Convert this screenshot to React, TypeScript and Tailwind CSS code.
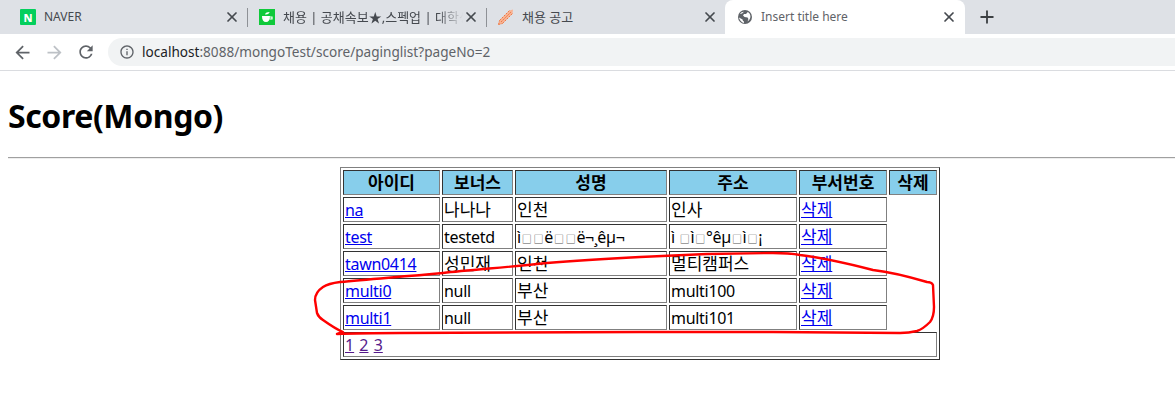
import { Plus, X } from "lucide-react";
import type { ReactNode } from "react";

const sans = "font-['Noto_Sans','Noto_Sans_CJK_KR',sans-serif]";

type Row = { id: string; bonus: string; name: string; addr: string };

const rows: Row[] = [
  { id: "na", bonus: "나나나", name: "인천", addr: "인사" },
  { id: "test", bonus: "testetd", name: "ì□□ë□□ë¬¸êµ¬", addr: "ì □ì□°êµ□ì□¡" },
  { id: "tawn0414", bonus: "성민재", name: "인천", addr: "멀티캠퍼스" },
  { id: "multi0", bonus: "null", name: "부산", addr: "multi100" },
  { id: "multi1", bonus: "null", name: "부산", addr: "multi101" },
];

const headers = [
  { label: "아이디", width: "w-[97px]" },
  { label: "보너스", width: "w-[71px]" },
  { label: "성명", width: "w-[152px]" },
  { label: "주소", width: "w-[128px]" },
  { label: "부서번호", width: "w-[88px]" },
  { label: "삭제", width: "w-[48px]" },
];

const cell =
  "h-[25px] border border-t-[#333333] border-l-[#333333] border-r-[#808080] border-b-[#808080] px-px py-0 text-left font-normal leading-[22px]";

// korean glyphs sit bigger in the screenshot, latin runs a bit narrower
function Txt({ value }: { value: string }) {
  if (/[가-힣]/.test(value)) return <span className="text-[17px] leading-none">{value}</span>;
  return (
    <span className="tracking-[-0.3px]">
      {value.split(/(□)/).map((part, i) =>
        part === "□" ? (
          <span key={i} className="mx-px text-[10px] leading-none text-[#555555]">
            □
          </span>
        ) : (
          part
        )
      )}
    </span>
  );
}

function NaverIcon() {
  return (
    <div className="flex h-4 w-4 items-center justify-center rounded-[1px] bg-[#03cf5d] text-[11px] leading-none font-extrabold text-white">
      N
    </div>
  );
}

function CupIcon() {
  return (
    <svg width="16" height="16" viewBox="0 0 16 16">
      <rect width="16" height="16" fill="#0fc93a" />
      <path d="M3 7 H11 C11 11 9.6 13 7 13 C4.4 13 3 11 3 7Z" fill="#fff" />
      <path d="M11 8 H13 V10 H10.6" fill="none" stroke="#fff" strokeWidth="1.2" />
      <path d="M6 5.4 C6.4 3.8 8.4 3 10.6 3 C10.2 4.8 8.4 5.8 6 5.4Z" fill="#fff" />
    </svg>
  );
}

function PencilIcon() {
  return (
    <svg width="16" height="16" viewBox="0 0 16 16" fill="none">
      <path d="M0.5 15.5 L1.5 11.5 L11.5 1.5 L15 0.5 L14.5 4.5 L4.5 14.5 Z" fill="#f8b394" />
      <path
        d="M1.5 11.5 L11.5 1.5 M4.5 14.5 L14.5 4.5 M3 13 L13 3 M0.5 15.5 L1.5 11.5 M0.5 15.5 L4.5 14.5"
        stroke="#ee7a46"
        strokeWidth="1"
        strokeDasharray="2 1"
      />
    </svg>
  );
}

function GlobeIcon() {
  return (
    <svg width="16" height="16" viewBox="0 0 16 16">
      <circle cx="8" cy="8" r="7" fill="#5f6368" />
      <path
        d="M7 14 C5.5 13.6 2.4 11.2 2 8.4 L5.6 10.6 L6 12 L7 12.6 Z M10.8 3 L9 5 L7 5 L6 6.6 L7.6 8 L10.6 8.4 L11.4 10 L10.6 12.4 C12.6 11 13.6 9 13.4 7 C13.2 5.2 12.2 3.8 10.8 3 Z M3 5 L5 4.4 L7 2.8 C5.4 2.8 3.8 3.6 3 5 Z"
        fill="#fff"
      />
    </svg>
  );
}

function Tab({
  icon,
  title,
  cls,
  textCls,
}: {
  icon: ReactNode;
  title: string;
  cls: string;
  textCls: string;
}) {
  return (
    <div className={`flex h-[34px] shrink-0 items-center ${cls}`}>
      {icon}
      <span className={`ml-2 flex-1 overflow-hidden leading-[18px] whitespace-nowrap ${textCls}`}>{title}</span>
      <X size={16} strokeWidth={2.6} className="shrink-0 text-[#45494f]" />
    </div>
  );
}

function Sep() {
  return <div className="mt-[8px] h-[19px] w-px shrink-0 bg-[#8e9196]" />;
}

function Chrome() {
  return (
    <div className={sans}>
      <div className="flex h-[34px] bg-[#dee1e6]">
        <Tab icon={<NaverIcon />} title="NAVER" cls="w-[247px] pl-5 pr-[7px]" textCls="text-xs text-[#45494f]" />
        <Sep />
        <Tab
          icon={<CupIcon />}
          title="채용 | 공채속보★,스펙업 | 대학생"
          cls="w-[238px] pl-[11px] pr-[7px]"
          textCls="text-[13px] text-[#45494f] [mask-image:linear-gradient(to_right,black_86%,transparent)]"
        />
        <Sep />
        <Tab icon={<PencilIcon />} title="채용 공고" cls="w-[238px] pl-[11px] pr-[7px]" textCls="text-[13px] text-[#45494f]" />
        <Tab
          icon={<GlobeIcon />}
          title="Insert title here"
          cls="w-[240px] rounded-t-lg bg-white pl-3 pr-2"
          textCls="text-xs text-[#5f6368]"
        />
        <div className="ml-[12px] flex h-[34px] items-center">
          <Plus size={20} strokeWidth={2.2} className="text-[#3c4043]" />
        </div>
      </div>
      <div className="flex h-[37px] items-start border-b border-[#dadce0] bg-white pt-[4px]">
        <div className="ml-[12px] flex h-[28px] w-[96px] items-center gap-[11px]">
          <svg width="21" height="21" viewBox="0 0 24 24" fill="#5f6368">
            <path d="M20 11H7.83l5.59-5.59L12 4l-8 8 8 8 1.41-1.41L7.83 13H20v-2z" />
          </svg>
          <svg width="21" height="21" viewBox="0 0 24 24" fill="#bdc1c6">
            <path d="M4 11h12.17l-5.59-5.59L12 4l8 8-8 8-1.41-1.41L16.17 13H4v-2z" />
          </svg>
          <svg width="20" height="20" viewBox="0 0 24 24" fill="#5f6368">
            <path d="M17.65 6.35A7.958 7.958 0 0012 4c-4.42 0-7.99 3.58-7.99 8s3.57 8 7.99 8c3.73 0 6.84-2.55 7.73-6h-2.08A5.99 5.99 0 0112 18c-3.31 0-6-2.69-6-6s2.69-6 6-6c1.66 0 3.14.69 4.22 1.78L13 11h7V4l-2.35 2.35z" />
          </svg>
        </div>
        <div className="flex h-[28px] flex-1 items-center rounded-l-full bg-[#f1f3f4] pl-[11px]">
          <svg width="16" height="16" viewBox="0 0 24 24" fill="#5f6368">
            <path d="M11 7h2v2h-2zm0 4h2v6h-2zm1-9C6.48 2 2 6.48 2 12s4.48 10 10 10 10-4.48 10-10S17.52 2 12 2zm0 18c-4.41 0-8-3.59-8-8s3.59-8 8-8 8 3.59 8 8-3.59 8-8 8z" />
          </svg>
          <span className="ml-[7px] text-[13.6px] leading-none text-[#5f6368]">
            <span className="text-[#202124]">localhost</span>:8088/mongoTest/score/paginglist?pageNo=2
          </span>
        </div>
      </div>
    </div>
  );
}

function ScoreTable() {
  const link = "text-[#0000ee] underline";
  const visited = "text-[#551a8b] underline";
  return (
    <table className="ml-[340px] w-[600px] table-fixed border-separate border-spacing-[2px] border border-t-[#808080] border-l-[#808080] border-r-[#333333] border-b-[#333333]">
      <thead>
        <tr>
          {headers.map((h) => (
            <th key={h.label} className={`${cell} ${h.width} bg-[#87ceeb] !text-center !font-bold text-[17px] text-black`}>
              {h.label}
            </th>
          ))}
        </tr>
      </thead>
      <tbody>
        {rows.map((r) => (
          <tr key={r.id}>
            <td className={cell}>
              <a className={link}>
                <Txt value={r.id} />
              </a>
            </td>
            <td className={cell}>
              <Txt value={r.bonus} />
            </td>
            <td className={cell}>
              <Txt value={r.name} />
            </td>
            <td className={cell}>
              <Txt value={r.addr} />
            </td>
            <td className={cell}>
              <a className={link}>
                <Txt value="삭제" />
              </a>
            </td>
          </tr>
        ))}
        <tr>
          <td colSpan={6} className={`${cell} [word-spacing:1px]`}>
            <a className={visited}>1</a> <a className={visited}>2</a> <a className={visited}>3</a>
          </td>
        </tr>
      </tbody>
    </table>
  );
}

export default function App() {
  return (
    <div className={`relative h-[415px] w-[1175px] overflow-hidden bg-white text-black ${sans}`}>
      <Chrome />
      <h1 className="ml-2 mt-[26px] text-[32px] leading-[38px] font-bold tracking-[-0.4px]">Score(Mongo)</h1>
      <hr className="ml-2 mt-[22px] border-t border-b border-t-[#a0a0a0] border-b-[#eeeeee]" />
      <div className="mt-[8px]">
        <ScoreTable />
      </div>
      <svg className="absolute inset-0" width="1175" height="415" fill="none">
        <path
          d="M640 257 C600 259 570 261 547 263 C510 267 470 270 443 273 C400 277 370 279 340 282 C332 283 326 285 323 287 C317 291 315 295 315 300 L317 313 C318 316 320 318 323 320 C330 325 338 330 343 332 L337 334 C360 333 380 333 400 333 L640 332 L773 332 L900 333 C908 333 913 332 917 331 C923 329 927 325 930 322 C933 318 934 313 934 307 L933 285 C932 283 930 282 927 282 C910 277 890 272 873 270 C850 264 825 258 800 255 C790 253 780 253 773 253 L707 254 Z"
          stroke="#ff0000"
          strokeWidth="2.4"
          strokeLinejoin="round"
        />
      </svg>
    </div>
  );
}
